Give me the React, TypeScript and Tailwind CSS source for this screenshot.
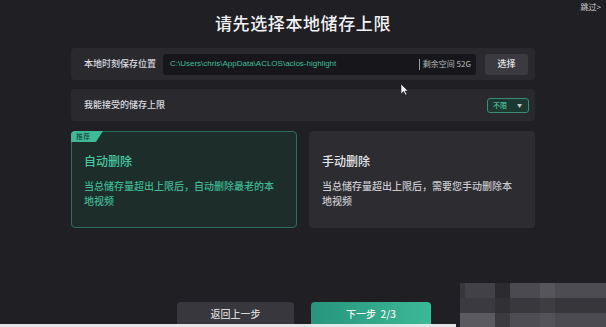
import type { ReactNode } from "react";

const font = { fontFamily: '"Noto Sans CJK SC", "Noto Sans", sans-serif' };

const Panel = ({ children }: { children: ReactNode }) => (
	<div className="flex h-[32px] w-[464px] items-center rounded-[4px] bg-[#29292e] pl-[13px] pr-[6px]">
		{children}
	</div>
);

const OptionCard = ({
	title,
	desc,
	active,
}: {
	title: string;
	desc: string;
	active?: boolean;
}) => (
	<div
		className={
			active
				? "relative h-[97px] rounded-[4px] border border-[#2f6e5e] bg-[#1c2d2a] px-[12px] pt-[21px]"
				: "relative h-[97px] rounded-[4px] border border-transparent bg-[#2c2c31] px-[12px] pt-[21px]"
		}
	>
		{active && (
			<div className="absolute -left-px -top-px flex h-[11px] w-[32px] items-center rounded-tl-[4px] bg-[#3dbb98] pl-[5px] text-[7px] leading-none text-[#153a30] [clip-path:polygon(0_0,100%_0,78%_100%,0_100%)]">
				推荐
			</div>
		)}
		<div
			className={
				active
					? "text-[12px] font-medium leading-[16px] text-[#47c9a2]"
					: "text-[12px] font-medium leading-[16px] text-[#e6e6ea]"
			}
		>
			{title}
		</div>
		<p
			className={
				active
					? "mt-[9px] w-[198px] text-[10px] font-medium leading-[15px] text-[#3fb893]"
					: "mt-[9px] w-[198px] text-[10px] font-medium leading-[15px] text-[#c9c9ce]"
			}
		>
			{desc}
		</p>
	</div>
);

export default function App() {
	return (
		<div
			className="relative flex h-[327px] w-[606px] flex-col items-center overflow-hidden bg-[#1f1f24] text-[#e4e4e8]"
			style={font}
		>
			<div className="flex w-full justify-end pr-[5px] pt-[1px] text-[8px] leading-[11px] text-[#d0d0d4]">
				跳过&gt;
			</div>
			<h1 className="mt-[1px] text-[17px] font-medium leading-[20px] tracking-[0.6px] text-[#f2f2f4]">
				请先选择本地储存上限
			</h1>

			<div className="mt-[15px]">
				<Panel>
					<span className="w-[79px] shrink-0 text-[9px] font-medium text-[#dcdce0]">本地时刻保存位置</span>
					<div className="flex h-[21px] w-[313px] items-center rounded-[3px] bg-[#17171b] pl-[7px] pr-[5px]">
						<span
							className="flex-1 truncate text-[8px] text-[#3fbf98]"
							style={{ fontFamily: '"Liberation Sans", sans-serif' }}
						>
							C:\Users\chris\AppData\ACLOS\aclos-highlight
						</span>
						<span className="mr-[3px] h-[11px] w-px bg-[#9a9aa0]" />
						<span className="text-[8px] text-[#b8b8bd]">剩余空间 52G</span>
					</div>
					<button className="ml-[9px] h-[21px] w-[43px] rounded-[3px] bg-[#3a3a40] text-[9px] font-medium text-[#e6e6ea]">
						选择
					</button>
				</Panel>
			</div>

			<div className="mt-[9px]">
				<Panel>
					<span className="flex-1 text-[9px] font-medium text-[#dcdce0]">我能接受的储存上限</span>
					<div className="flex h-[15px] w-[42px] items-center justify-between rounded-[3px] border border-[#3a8c75] bg-[#1b3831] pl-[5px] pr-[6px]">
						<span className="text-[7px] text-[#5fd3b0]">不限</span>
						<span className="text-[5px] text-[#c8c8cc]">▼</span>
					</div>
				</Panel>
			</div>

			<div className="mt-[10px] grid w-[464px] grid-cols-2 gap-[12px]">
				<OptionCard active title="自动删除" desc="当总储存量超出上限后，自动删除最老的本地视频" />
				<OptionCard title="手动删除" desc="当总储存量超出上限后，需要您手动删除本地视频" />
			</div>

			<div className="mt-[74px] flex gap-[17px] pl-[2px]">
				<button className="h-[26px] w-[117px] rounded-t-[4px] bg-[#37373d] pb-[4px] text-[10px] font-medium text-[#d6d6da]">
					返回上一步
				</button>
				<button className="h-[26px] w-[120px] rounded-t-[4px] bg-gradient-to-r from-[#27957c] to-[#3bb997] pb-[4px] text-[10px] font-medium text-[#f2f2f2]">
					下一步&nbsp;&nbsp;2/3
				</button>
			</div>

			<div className="absolute bottom-0 left-0 h-[3px] w-[456px] bg-[#e6e6e8]" />

			<div className="absolute left-[460px] top-[283px] flex flex-col">
				<div className="flex h-[15px]">
					<div className="w-[5px] bg-[#36363b]" />
					<div className="w-[30px] bg-[#414147]" />
					<div className="w-[15px] bg-[#2b2b30]" />
					<div className="w-[30px] bg-[#4a4a50]" />
					<div className="w-[15px] bg-[#55555a]" />
					<div className="w-[51px] bg-[#4c4c52]" />
				</div>
				<div className="flex h-[15px]">
					<div className="w-[35px] bg-[#3a3a40]" />
					<div className="w-[15px] bg-[#303035]" />
					<div className="w-[30px] bg-[#38383d]" />
					<div className="w-[15px] bg-[#3d3d42]" />
					<div className="w-[51px] bg-[#36363b]" />
				</div>
				<div className="flex h-[14px]">
					<div className="w-[35px] bg-[#5a5a60]" />
					<div className="w-[15px] bg-[#3a3a3f]" />
					<div className="w-[30px] bg-[#4d4d53]" />
					<div className="w-[15px] bg-[#525257]" />
					<div className="w-[51px] bg-[#4a4a50]" />
				</div>
			</div>

			<svg className="absolute left-[400px] top-[83px]" width="9" height="13" viewBox="0 0 9 13">
				<path d="M1 1 L1 11 L3.5 8.5 L5.5 12 L7 11.2 L5 8 L8 8 Z" fill="#f4f4f4" stroke="#222" strokeWidth="0.6" />
			</svg>
		</div>
	);
}
